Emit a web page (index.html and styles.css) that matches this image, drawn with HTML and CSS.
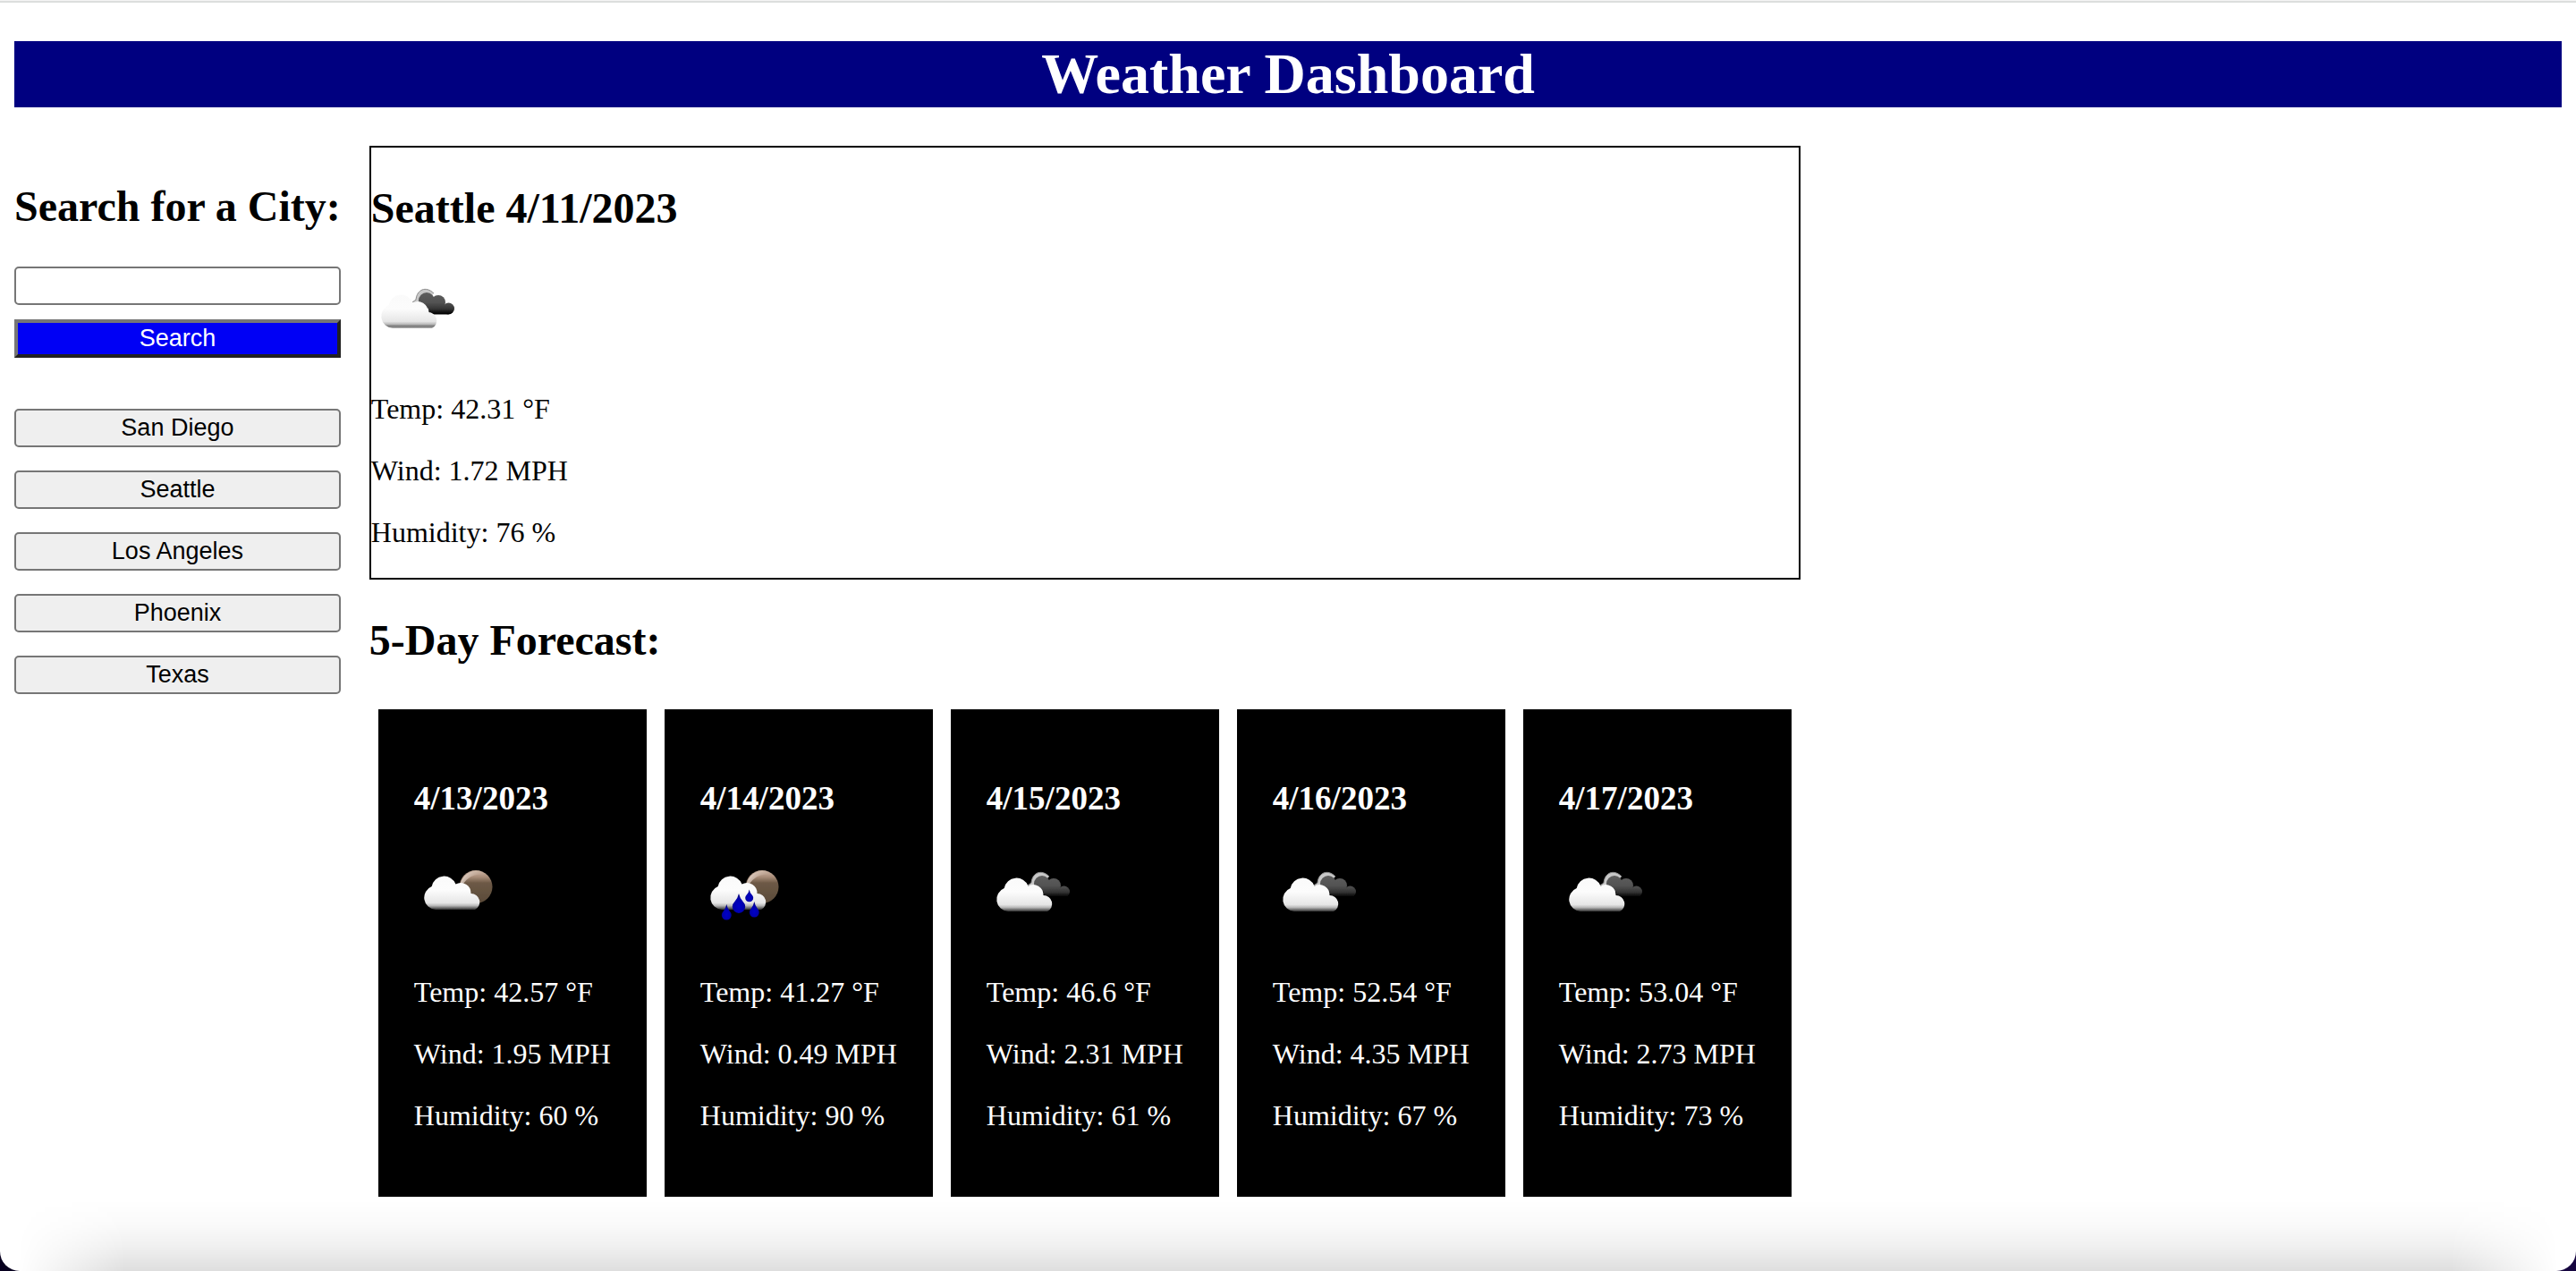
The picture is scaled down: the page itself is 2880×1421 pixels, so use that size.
FILE: index.html
```html
<!DOCTYPE html>
<html lang="en">
<head>
<meta charset="utf-8">
<title>Weather Dashboard</title>
<link rel="stylesheet" href="styles.css">
</head>
<body>
<svg class="sprite" aria-hidden="true">
  <defs>
    <linearGradient id="cloud-fill" gradientUnits="userSpaceOnUse" x1="0" y1="29" x2="0" y2="67">
      <stop offset="0" stop-color="#fafafa"/>
      <stop offset=".42" stop-color="#fcfcfc"/>
      <stop offset=".8" stop-color="#e6e6e6"/>
      <stop offset=".88" stop-color="#bbb"/>
      <stop offset=".94" stop-color="#777"/>
      <stop offset="1" stop-color="#666" stop-opacity=".5"/>
    </linearGradient>
    <linearGradient id="dark-fill" gradientUnits="userSpaceOnUse" x1="0" y1="25" x2="0" y2="52">
      <stop offset="0" stop-color="#606060"/>
      <stop offset=".5" stop-color="#525252"/>
      <stop offset=".75" stop-color="#363636"/>
      <stop offset=".95" stop-color="#000"/>
    </linearGradient>
    <linearGradient id="moon-fill" gradientUnits="userSpaceOnUse" x1="0" y1="21" x2="0" y2="58">
      <stop offset="0" stop-color="#cdb5a4"/>
      <stop offset=".2" stop-color="#a98d79"/>
      <stop offset=".38" stop-color="#6d5946"/>
      <stop offset="1" stop-color="#594a38"/>
    </linearGradient>
    <linearGradient id="moon-rim" gradientUnits="userSpaceOnUse" x1="52" y1="22" x2="78" y2="34">
      <stop offset="0" stop-color="#f3e8e1"/>
      <stop offset="1" stop-color="#b89a86" stop-opacity="0"/>
    </linearGradient>
    <radialGradient id="drop-fill" cx=".5" cy=".65" r=".65">
      <stop offset="0" stop-color="#0000c8"/>
      <stop offset=".6" stop-color="#0000ac"/>
      <stop offset="1" stop-color="#000068"/>
    </radialGradient>
    <filter id="soft" x="-10%" y="-10%" width="120%" height="120%"><feGaussianBlur stdDeviation=".7"/></filter>
  </defs>
  <symbol id="front-cloud" viewBox="0 0 100 100">
    <g fill="url(#cloud-fill)" filter="url(#soft)">
      <path d="M24 67A13.5 13.5 0 0 1 19.7 41A14 14 0 0 1 46.5 38.5A11.5 11.5 0 0 1 63.5 49A9.5 9.5 0 0 1 68 67Z"/>
    </g>
  </symbol>
  <symbol id="moon" viewBox="0 0 100 100">
    <g filter="url(#soft)">
      <circle cx="69" cy="39.5" r="18.5" fill="url(#moon-fill)"/>
      <path d="M51 42A18.5 18.5 0 0 1 84 29Q67 20 55 36Z" fill="url(#moon-rim)"/>
    </g>
  </symbol>
  <symbol id="broken" viewBox="0 0 100 100">
    <g filter="url(#soft)">
      <path d="M46 38L50 35C51 24 61 19 70 28L62 36L54 38Z" fill="#c8c8c8"/>
      <path d="M46 38L50 35C51 24 61 19 70 28" fill="none" stroke="#8c8c8c"/>
      <g fill="url(#dark-fill)">
        <circle cx="62" cy="36" r="9"/>
        <circle cx="75" cy="38" r="8"/>
        <circle cx="86.500" cy="45" r="6.500"/>
        <path d="M62 36H75L86.500 45V51.500H65Z"/>
      </g>
    </g>
    <use href="#front-cloud"/>
  </symbol>
  <symbol id="few" viewBox="0 0 100 100">
    <use href="#moon"/>
    <use href="#front-cloud" y="-2"/>
  </symbol>
  <symbol id="rain" viewBox="0 0 100 100">
    <use href="#few"/>
    <g fill="url(#drop-fill)" filter="url(#soft)">
      <path d="M43 47Q44 52 48 56.500A7.200 7.200 0 1 1 38 56.500Q42 52 43 47Z"/>
      <path d="M29.300 59Q30 63 33 67A5.500 5.500 0 1 1 25.600 67Q28.600 63 29.300 59Z"/>
      <path d="M60.300 56Q61 60 64 64A5.500 5.500 0 1 1 56.600 64Q59.600 60 60.300 56Z"/>
      <path d="M54.700 42.500Q55.200 46 57.700 48.500A4.500 4.500 0 1 1 51.700 48.500Q54.200 46 54.700 42.500Z"/>
    </g>
  </symbol>
</svg>

<header class="header"><h1 class="title">Weather Dashboard</h1></header>

<main class="layout">
  <aside class="sidebar">
    <form class="search">
      <h2 class="heading"><label for="city">Search for a City:</label></h2>
      <input class="field" id="city" type="text" size="10">
      <button class="submit" type="button">Search</button>
    </form>
    <div class="history">
      <button class="city" type="button">San Diego</button>
      <button class="city" type="button">Seattle</button>
      <button class="city" type="button">Los Angeles</button>
      <button class="city" type="button">Phoenix</button>
      <button class="city" type="button">Texas</button>
    </div>
  </aside>

  <div class="weather">
    <section class="current">
      <h2 class="heading">Seattle 4/11/2023</h2>
      <svg class="icon" role="img" aria-label="Broken clouds"><use href="#broken"/></svg>
      <p class="reading">Temp: 42.31 °F</p>
      <p class="reading">Wind: 1.72 MPH</p>
      <p class="reading">Humidity: 76 %</p>
    </section>

    <h2 class="heading">5-Day Forecast:</h2>
    <section class="forecast">
      <article class="card">
        <h3 class="date">4/13/2023</h3>
        <svg class="icon" role="img" aria-label="Few clouds"><use href="#few"/></svg>
        <p class="reading">Temp: 42.57 °F</p>
        <p class="reading">Wind: 1.95 MPH</p>
        <p class="reading">Humidity: 60 %</p>
      </article>
      <article class="card">
        <h3 class="date">4/14/2023</h3>
        <svg class="icon" role="img" aria-label="Rain"><use href="#rain"/></svg>
        <p class="reading">Temp: 41.27 °F</p>
        <p class="reading">Wind: 0.49 MPH</p>
        <p class="reading">Humidity: 90 %</p>
      </article>
      <article class="card">
        <h3 class="date">4/15/2023</h3>
        <svg class="icon" role="img" aria-label="Broken clouds"><use href="#broken"/></svg>
        <p class="reading">Temp: 46.6 °F</p>
        <p class="reading">Wind: 2.31 MPH</p>
        <p class="reading">Humidity: 61 %</p>
      </article>
      <article class="card">
        <h3 class="date">4/16/2023</h3>
        <svg class="icon" role="img" aria-label="Broken clouds"><use href="#broken"/></svg>
        <p class="reading">Temp: 52.54 °F</p>
        <p class="reading">Wind: 4.35 MPH</p>
        <p class="reading">Humidity: 67 %</p>
      </article>
      <article class="card">
        <h3 class="date">4/17/2023</h3>
        <svg class="icon" role="img" aria-label="Broken clouds"><use href="#broken"/></svg>
        <p class="reading">Temp: 53.04 °F</p>
        <p class="reading">Wind: 2.73 MPH</p>
        <p class="reading">Humidity: 73 %</p>
      </article>
    </section>
  </div>
</main>
</body>
</html>
```
FILE: styles.css
```css
* {
  box-sizing: border-box;
}

html {
  background: linear-gradient(90deg, #07001f, #160640);
}

body {
  position: relative;
  min-height: 100vh;
  margin: 0;
  padding: 0 16px;
  border-radius: 0 0 22px 22px;
  background: linear-gradient(#f4f4f4 1px, #dcdedd 1px, #dcdedd 3px, #fff 3px);
  color: #000;
  font-family: "Liberation Serif", "Times New Roman", serif;
  font-size: 32px;
  line-height: 37px;
}

/* soft shade along the lower edge of the window */
body::after {
  content: "";
  position: absolute;
  bottom: 0;
  left: 20px;
  right: 20px;
  height: 80px;
  background: linear-gradient(transparent, rgba(0, 0, 0, 0.02) 35%, rgba(0, 0, 0, 0.06) 65%, rgba(0, 0, 0, 0.13));
  mask-image: linear-gradient(90deg, transparent, #000 120px, #000 calc(100% - 120px), transparent);
  pointer-events: none;
}

.sprite {
  position: absolute;
  width: 0;
  height: 0;
}

.header {
  padding: 46px 0 43px;
}

.title {
  margin: 0;
  background: #000080;
  color: #fff;
  font-size: 64px;
  line-height: 74px;
  text-align: center;
}

.layout {
  display: grid;
  grid-template-columns: max-content minmax(0, 1600px);
  gap: 32px;
}

.heading {
  margin: 0;
  padding: 40px 0;
  font-size: 48px;
  line-height: 55px;
}

.sidebar {
  display: flex;
  flex-direction: column;
  gap: 57px;
}

.search,
.history {
  display: flex;
  flex-direction: column;
}

.history {
  gap: 26px;
}

.field,
.submit,
.city {
  width: 100%;
  height: 43px;
  margin: 0;
  padding: 0 12px;
  font-family: "Liberation Sans", Arial, sans-serif;
  font-size: 27px;
  line-height: 31px;
}

.field,
.city {
  border: 2px solid #767676;
  border-radius: 5px;
}

.field {
  margin-bottom: 16px;
  background: #fff;
}

.submit {
  border: 4px solid;
  border-color: #767676 #212121 #212121 #767676;
  background: #0000f5;
  color: #fff;
}

.city {
  background: #efefef;
  color: #000;
}

.current {
  border: 2px solid #000;
}

.icon {
  display: block;
  width: 100px;
  height: 100px;
  margin-bottom: 39px;
}

.reading {
  margin: 0 0 32px;
  white-space: nowrap;
}

.forecast {
  display: grid;
  grid-template-columns: repeat(5, minmax(0, 1fr));
  gap: 20px;
  padding: 10px;
}

.card {
  padding: 40px;
  background: #000;
  color: #fff;
}

.date {
  margin: 0;
  padding: 38px 0;
  font-size: 37px;
  line-height: 43px;
}
```
